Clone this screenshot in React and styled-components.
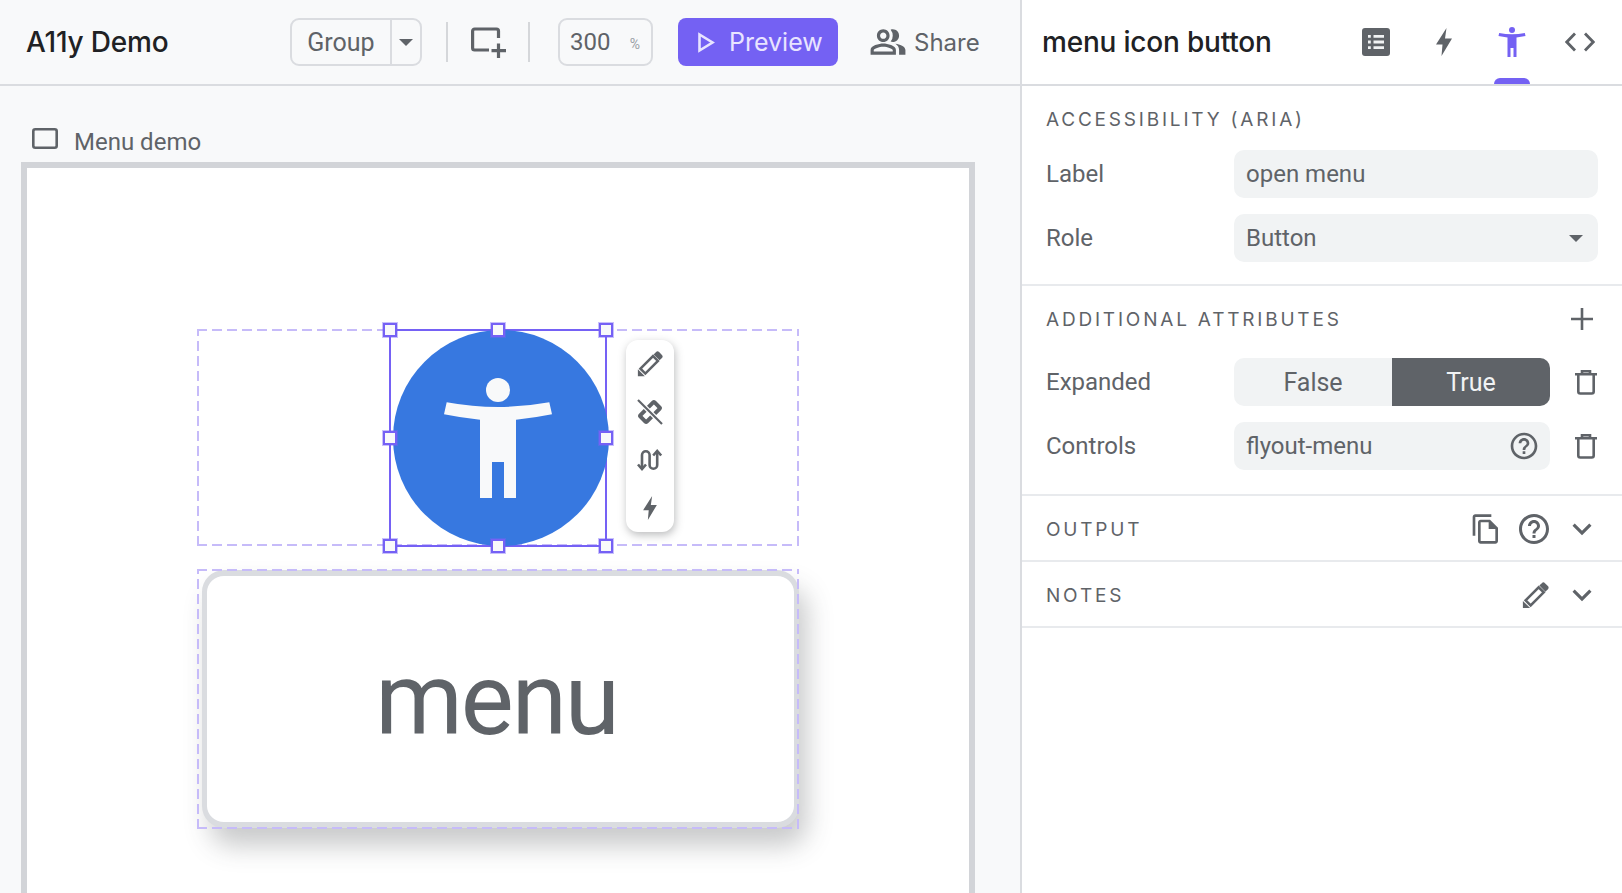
import React from 'react';
import styled, { createGlobalStyle, css } from 'styled-components';
import { MdOutlinePeopleAlt, MdHelpOutline, MdOutlineFileCopy, MdExpandMore } from 'react-icons/md';

const GlobalStyle = createGlobalStyle`
  html, body { margin: 0; padding: 0; height: 100%; }
  body { font-family: Roboto, "Liberation Sans", sans-serif; color: #5f6368; background: #f8f9fa; overflow: hidden; }
  * { box-sizing: border-box; }
`

const heading = css`
  font-family: Inter, "Open Sans", Roboto, sans-serif;
`

const Page = styled.div`
  display: grid;
  grid-template-columns: 1020px minmax(0, 1fr);
  height: 100vh;
  overflow: hidden;
`

/* left side */
const Editor = styled.div`
  display: flex;
  flex-direction: column;
  min-width: 0;
`
const Toolbar = styled.div`
  display: flex;
  align-items: center;
  flex: 0 0 86px;
  padding-left: 26px;
  background: #f8f9fa;
  border-bottom: 2px solid #dadce0;
`
const AppTitle = styled.div`
  ${heading}
  flex: 0 0 264px;
  font-size: 28px;
  font-weight: 450;
  color: #202124;
  letter-spacing: -0.2px;
`
const GroupSelect = styled.div`
  display: grid;
  grid-template-columns: 100px 1fr;
  width: 132px;
  height: 48px;
  border: 2px solid #dadce0;
  border-radius: 9px;
  font-size: 25px;
`
const GroupText = styled.div`
  display: flex;
  align-items: center;
  justify-content: center;
  border-right: 2px solid #dadce0;
`
const CaretCell = styled.div`
  display: flex;
  align-items: center;
  justify-content: center;
`
const Caret = styled.i`
  width: 0;
  height: 0;
  border-left: 7px solid transparent;
  border-right: 7px solid transparent;
  border-top: 7px solid #5f6368;
`
const FieldCaret = styled(Caret)`
  margin-right: 5px;
`
const VLine = styled.div`
  width: 2px;
  height: 40px;
  background: #d5d7da;
  margin: ${p => p.$margin};
`
const ZoomBox = styled.div`
  display: flex;
  align-items: center;
  justify-content: space-between;
  width: 95px;
  height: 48px;
  padding: 0 11px 0 10px;
  border: 2px solid #dadce0;
  border-radius: 9px;
  font-size: 24px;
`
const Percent = styled.span`
  font-size: 14px;
  color: #9aa0a6;
  padding-top: 3px;
`
const PreviewButton = styled.div`
  ${heading}
  display: flex;
  align-items: center;
  gap: 14px;
  width: 160px;
  height: 48px;
  margin-left: 25px;
  padding-left: 20px;
  border-radius: 8px;
  background: #7461f3;
  color: #e8e4ff;
  font-size: 25px;
`
const ShareButton = styled.div`
  ${heading}
  display: flex;
  align-items: center;
  gap: 7px;
  margin-left: 31px;
  font-size: 24px;
`
const Canvas = styled.div`
  flex: 1;
  min-height: 0;
  padding: 42px 0 0 21px;
  background: #f8f9fa;
`
const FrameLabel = styled.div`
  display: flex;
  align-items: center;
  gap: 16px;
  height: 28px;
  padding-left: 11px;
  margin-bottom: 6px;
  font-size: 24px;
  svg { align-self: flex-start; }
`
const Frame = styled.div`
  width: 954px;
  height: 800px;
  padding: 161px 0 0 170px;
  border: 6px solid #d2d4d8;
  background: #fff;
`
const dashes = '#c6bbf9'
const DashedBox = styled.div`
  position: relative;
  display: flex;
  width: 602px;
  height: ${p => p.$height}px;
  margin-bottom: 23px;
  &::after {
    content: "";
    position: absolute;
    inset: 0;
    pointer-events: none;
    background:
      repeating-linear-gradient(90deg, ${dashes} 0 10px, transparent 10px 15px) top / 100% 2px no-repeat,
      repeating-linear-gradient(90deg, ${dashes} 0 10px, transparent 10px 15px) bottom / 100% 2px no-repeat,
      repeating-linear-gradient(0deg, ${dashes} 0 10px, transparent 10px 15px) left / 2px 100% no-repeat,
      repeating-linear-gradient(0deg, ${dashes} 0 10px, transparent 10px 15px) right / 2px 100% no-repeat;
  }
`
const Selection = styled.div`
  position: relative;
  width: 218px;
  height: 218px;
  margin-left: 192px;
  z-index: 1;
  border: 2px solid #7561f5;
`
const Circle = styled.div`
  position: absolute;
  left: 2px;
  top: -1px;
  width: 216px;
  height: 216px;
  border-radius: 50%;
  background: #3778e0;
  display: flex;
  align-items: center;
  justify-content: center;
  padding: 0 6px 0 0;
`
const Handle = styled.i`
  position: absolute;
  left: ${p => p.$x}px;
  top: ${p => p.$y}px;
  width: 14px;
  height: 14px;
  background: #f8f9fa;
  border: 2px solid #7561f5;
  box-shadow: 0 0 0 1px rgba(117, 97, 245, 0.4);
`
const FloatBar = styled.div`
  position: absolute;
  left: 235px;
  top: 9px;
  width: 48px;
  height: 192px;
  border-radius: 12px;
  background: #fff;
  box-shadow: 1px 3px 8px rgba(60, 64, 67, 0.35);
  display: flex;
  flex-direction: column;
`
const FloatItem = styled.div`
  flex: 1;
  display: flex;
  align-items: center;
  justify-content: center;
  color: #5f6368;
`
const MenuCard = styled.div`
  width: 600px;
  height: 258px;
  margin: 1px 0 0 5px;
  padding-right: 8px;
  border-style: solid;
  border-color: #dadce0;
  border-width: 6px 5px;
  border-radius: 22px;
  background: #fff;
  box-shadow: 8px 18px 26px rgba(60, 64, 67, 0.28);
  display: flex;
  align-items: center;
  justify-content: center;
  font-size: 100px;
  letter-spacing: -2.2px;
`

/* right side */
const Panel = styled.div`
  min-width: 0;
  background: #fff;
  border-left: 2px solid #dadce0;
  display: flex;
  flex-direction: column;
`
const PanelTop = styled.div`
  position: relative;
  flex: 0 0 86px;
  display: flex;
  align-items: center;
  padding-left: 20px;
  border-bottom: 2px solid #dadce0;
`
const PanelTitle = styled.div`
  ${heading}
  flex: 0 0 300px;
  font-size: 28px;
  font-weight: 450;
  color: #202124;
  letter-spacing: -0.2px;
`
const PanelTabs = styled.div`
  display: flex;
  align-items: center;
`
const Tab = styled.div`
  width: 68px;
  display: flex;
  justify-content: center;
  color: ${p => (p.$active ? '#7461f3' : '#5f6368')};
`
const TabMark = styled.i`
  position: absolute;
  left: 472px;
  bottom: 0;
  width: 36px;
  height: 6px;
  border-radius: 6px 6px 0 0;
  background: #7461f3;
`
const Section = styled.div`
  padding: 0 24px ${p => p.$bottom || 0}px 24px;
  border-bottom: 2px solid #e8eaed;
`
const SectionHead = styled.div`
  ${heading}
  display: flex;
  align-items: center;
  height: ${p => p.$height}px;
  padding: ${p => p.$top ?? 2}px 0 ${p => p.$pad || 0}px;
  font-size: 19px;
  letter-spacing: 2.8px;
`
const HeadTools = styled.div`
  margin-left: auto;
  margin-right: ${p => p.$right || 0}px;
  display: flex;
  align-items: center;
  gap: ${p => p.$gap || 0}px;
`
const CopyIcon = styled(MdOutlineFileCopy)`
  margin-right: 3px;
`
const Rows = styled.div`
  display: flex;
  flex-direction: column;
  gap: 16px;
`
const Row = styled.div`
  display: flex;
  align-items: center;
  font-size: 24px;
`
const RowLabel = styled.div`
  flex: 0 0 188px;
`
const Field = styled.div`
  display: flex;
  align-items: center;
  justify-content: space-between;
  flex: ${p => (p.$short ? '0 0 316px' : '1')};
  height: 48px;
  padding: 0 10px 0 12px;
  border-radius: 10px;
  background: #f1f3f4;
`
const Toggle = styled.div`
  display: grid;
  grid-template-columns: 158px 158px;
  flex: 0 0 316px;
  height: 48px;
  border-radius: 10px;
  overflow: hidden;
  background: #f1f3f4;
  font-size: 25px;
`
const ToggleOption = styled.div`
  display: flex;
  align-items: center;
  justify-content: center;
  background: ${p => (p.$on ? '#5f6368' : 'transparent')};
  color: ${p => (p.$on ? '#f1f3f4' : '#5f6368')};
`
const TrashSlot = styled.div`
  margin-left: auto;
  margin-right: 1px;
  display: flex;
`

const Bolt = ({ w = 16, h = 28 }) => (
  <svg width={w} height={h} viewBox="0 0 16 28" fill="currentColor">
    <path d="M10.5 0 L0 16.5 H6.5 L5.5 28 L16 10.5 H9 Z" />
  </svg>
)
const Person = ({ w, h, fill }) => (
  <svg width={w} height={h} viewBox="0 0 108 120" fill={fill}>
    <circle cx="54" cy="12" r="12" />
    <path d="M2.7 24.3 Q54 33.7 105.3 24.3 L108 36.3 Q90 40 72 41.7 V120 H60 V84 H48 V120 H36 V41.7 Q18 40 0 36.3 Z" />
  </svg>
)
const Pencil = ({ size }) => (
  <svg width={size} height={size} viewBox="0 0 24 24" fill="#5f6368">
    <path d="M3.2 16.3 L14.8 4.7 L19.3 9.2 L7.7 20.8 Z" fill="none" stroke="#5f6368" strokeWidth="2.3" />
    <path d="M0.8 23.2 V16.8 L7.2 23.2 Z" />
    <path d="M15.4 3.2 L17.6 1 a2 2 0 0 1 2.8 0 L23 3.6 a2 2 0 0 1 0 2.8 L20.8 8.6 Z" />
  </svg>
)
const Trash = () => (
  <svg width="22" height="25" viewBox="0 0 22 25" fill="none" stroke="currentColor" strokeWidth="2.6">
    <path d="M0 4.3 H22 M7 4.3 V1.3 H15 V4.3 M3.3 4.3 V21.5 a2 2 0 0 0 2 2 H16.7 a2 2 0 0 0 2 -2 V4.3" />
  </svg>
)
const Plus = () => (
  <svg width="22" height="22" viewBox="0 0 22 22" stroke="currentColor" strokeWidth="2.6">
    <path d="M11 0 V22 M0 11 H22" />
  </svg>
)
const AddFrame = () => (
  <svg width="36" height="31" viewBox="0 0 36 31" fill="none" stroke="currentColor" strokeWidth="3.2">
    <path d="M27.5 11 V4 a2 2 0 0 0 -2 -2 H3.6 a2 2 0 0 0 -2 2 V21 a2 2 0 0 0 2 2 H18" />
    <path d="M27.5 16.5 V31 M20.5 23.7 H35" />
  </svg>
)
const FrameIcon = () => (
  <svg width="26" height="21" viewBox="0 0 26 21" fill="none" stroke="currentColor" strokeWidth="2.6">
    <rect x="1.3" y="1.3" width="23.4" height="18.4" rx="2" />
  </svg>
)
const ListIcon = () => (
  <svg width="28" height="28" viewBox="0 0 28 28">
    <rect width="28" height="28" rx="3" fill="#5f6368" />
    <path d="M6 8.3 H8.8 M11.5 8.3 H22 M6 14 H8.8 M11.5 14 H22 M6 19.7 H8.8 M11.5 19.7 H22" stroke="#f1f3f4" strokeWidth="2.8" />
  </svg>
)
const CodeIcon = () => (
  <svg width="30" height="20" viewBox="0 0 30 20" fill="none" stroke="#5f6368" strokeWidth="2.8">
    <path d="M10 1.5 L1.8 10 L10 18.5 M20 1.5 L28.2 10 L20 18.5" />
  </svg>
)
const PlayIcon = () => (
  <svg width="17" height="21" viewBox="0 0 17 21" fill="none" stroke="#e8e4ff" strokeWidth="2.6">
    <path d="M1.5 2.5 V18.5 L14.5 10.5 Z" />
  </svg>
)
const UnlinkIcon = () => (
  <svg width="26" height="26" viewBox="0 0 26 26" fill="none" stroke="#5f6368">
    <rect x="3" y="8.5" width="20" height="9" rx="1" strokeWidth="4" transform="rotate(-45 13 13)" />
    <path d="M1 1 L25 25" stroke="#fff" strokeWidth="4.6" />
    <path d="M1 1 L25 25" strokeWidth="2.2" />
  </svg>
)
const RouteIcon = () => (
  <svg width="26" height="22" viewBox="0 0 26 22" fill="none" stroke="#5f6368" strokeWidth="2.6">
    <path d="M5 20 V6 a3.8 3.8 0 0 1 7.6 0 V16 a3.8 3.8 0 0 0 7.6 0 V2" />
    <path d="M1 15.5 L5 20 L9 15.5 M16.2 6.5 L20.2 2 L24.2 6.5" />
  </svg>
)

const handleSpots = [
  [-8, -8], [100, -8], [208, -8],
  [-8, 100], [208, 100],
  [-8, 208], [100, 208], [208, 208],
]

export default function App() {
  return (
    <Page>
      <GlobalStyle />
      <Editor>
        <Toolbar>
          <AppTitle>A11y Demo</AppTitle>
          <GroupSelect>
            <GroupText>Group</GroupText>
            <CaretCell><Caret /></CaretCell>
          </GroupSelect>
          <VLine $margin="0 23px 0 24px" />
          <AddFrame />
          <VLine $margin="0 28px 0 21px" />
          <ZoomBox>300<Percent>%</Percent></ZoomBox>
          <PreviewButton><PlayIcon />Preview</PreviewButton>
          <ShareButton><MdOutlinePeopleAlt size={38} />Share</ShareButton>
        </Toolbar>
        <Canvas>
          <FrameLabel><FrameIcon />Menu demo</FrameLabel>
          <Frame>
            <DashedBox $height={217}>
              <Selection>
                <Circle><Person w={108} h={120} fill="#f8f9fa" /></Circle>
                {handleSpots.map(([x, y]) => <Handle key={`${x}-${y}`} $x={x} $y={y} />)}
                <FloatBar>
                  <FloatItem><Pencil size={26} /></FloatItem>
                  <FloatItem><UnlinkIcon /></FloatItem>
                  <FloatItem><RouteIcon /></FloatItem>
                  <FloatItem><Bolt w={14} h={24} /></FloatItem>
                </FloatBar>
              </Selection>
            </DashedBox>
            <DashedBox $height={260}>
              <MenuCard>menu</MenuCard>
            </DashedBox>
          </Frame>
        </Canvas>
      </Editor>
      <Panel>
        <PanelTop>
          <PanelTitle>menu icon button</PanelTitle>
          <PanelTabs>
            <Tab><ListIcon /></Tab>
            <Tab><Bolt /></Tab>
            <Tab $active><Person w={28} h={30} fill="currentColor" /></Tab>
            <Tab><CodeIcon /></Tab>
          </PanelTabs>
          <TabMark />
        </PanelTop>
        <Section $bottom={22}>
          <SectionHead $height={64}>ACCESSIBILITY (ARIA)</SectionHead>
          <Rows>
            <Row><RowLabel>Label</RowLabel><Field>open menu</Field></Row>
            <Row><RowLabel>Role</RowLabel><Field>Button<FieldCaret /></Field></Row>
          </Rows>
        </Section>
        <Section $bottom={24}>
          <SectionHead $height={72} $top={0} $pad={6}>
            ADDITIONAL ATTRIBUTES
            <HeadTools $right={5}><Plus /></HeadTools>
          </SectionHead>
          <Rows>
            <Row>
              <RowLabel>Expanded</RowLabel>
              <Toggle>
                <ToggleOption>False</ToggleOption>
                <ToggleOption $on>True</ToggleOption>
              </Toggle>
              <TrashSlot><Trash /></TrashSlot>
            </Row>
            <Row>
              <RowLabel>Controls</RowLabel>
              <Field $short>flyout-menu<MdHelpOutline size={32} /></Field>
              <TrashSlot><Trash /></TrashSlot>
            </Row>
          </Rows>
        </Section>
        <Section>
          <SectionHead $height={64}>
            OUTPUT
            <HeadTools $gap={11} $right={-3}>
              <CopyIcon size={32} />
              <MdHelpOutline size={36} />
              <MdExpandMore size={38} />
            </HeadTools>
          </SectionHead>
        </Section>
        <Section>
          <SectionHead $height={64}>
            NOTES
            <HeadTools $gap={14} $right={-3}>
              <Pencil size={27} />
              <MdExpandMore size={38} />
            </HeadTools>
          </SectionHead>
        </Section>
      </Panel>
    </Page>
  );
}
